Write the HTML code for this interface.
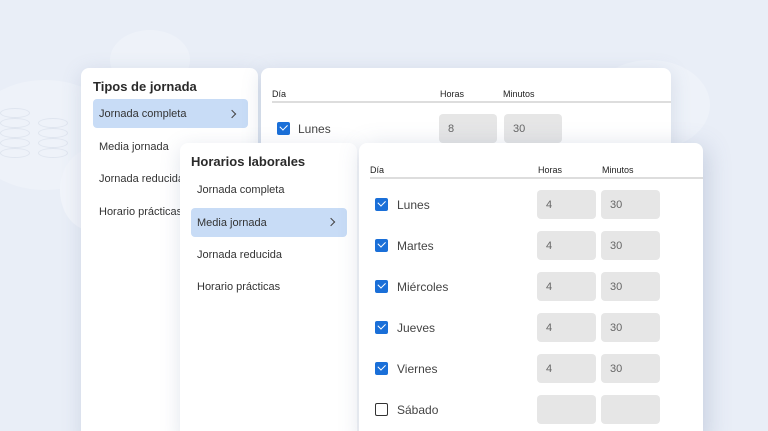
<!DOCTYPE html>
<html><head><meta charset="utf-8"><style>
*{margin:0;padding:0;box-sizing:border-box}
html,body{width:768px;height:431px;overflow:hidden}
body{background:#e9eef7;font-family:"Liberation Sans",sans-serif;position:relative;color:#333}
.card{position:absolute;background:#fff;border-radius:8px;box-shadow:0 4px 20px rgba(90,110,150,.18)}
.t{position:absolute;font-size:11px;color:#333;white-space:nowrap;line-height:1}
.title{font-size:13px;font-weight:bold;color:#2a2a2a}
.hl{position:absolute;background:#c8dcf6;border-radius:4px}
.chev{position:absolute;width:6px;height:6px;border-right:1.5px solid #444;border-top:1.5px solid #444;transform:rotate(45deg)}
.hdr{font-size:9px;color:#222}
.line{position:absolute;height:1.5px;background:#ddd}
.cb{position:absolute;width:13px;height:13px;border-radius:2px;background:#1a6fd8}
.cb::after{content:"";position:absolute;left:3px;top:2px;width:6px;height:3.5px;border-left:1.8px solid #fff;border-bottom:1.8px solid #fff;transform:rotate(-45deg)}
.cb.off{background:#fff;border:1.5px solid #333}
.cb.off::after{display:none}
.in{position:absolute;width:59px;height:29px;background:#e6e6e6;border-radius:4px;font-size:11px;color:#666;padding:10px 0 0 9px;line-height:1}
.day{font-size:12px;color:#444}
.cloud{position:absolute;border-radius:50%;background:#eef2f9}
.db{position:absolute;width:30px;height:10px;border:1.5px solid #dfe5ef;border-radius:50%}
</style></head><body>
<div class="cloud" style="left:-30px;top:80px;width:150px;height:110px"></div>
<div class="cloud" style="left:60px;top:150px;width:60px;height:80px;background:#f1f4fa"></div>
<div class="cloud" style="left:110px;top:30px;width:80px;height:60px"></div>
<div class="cloud" style="left:590px;top:60px;width:120px;height:90px"></div>
<div class="db" style="left:0;top:108px"></div><div class="db" style="left:0;top:118px"></div><div class="db" style="left:0;top:128px"></div><div class="db" style="left:0;top:138px"></div><div class="db" style="left:0;top:148px"></div>
<div class="db" style="left:38px;top:118px"></div><div class="db" style="left:38px;top:128px"></div><div class="db" style="left:38px;top:138px"></div><div class="db" style="left:38px;top:148px"></div>

<!-- back left -->
<div class="card" style="left:81px;top:68px;width:177px;height:380px"></div>
<div class="t title" style="left:93px;top:80px">Tipos de jornada</div>
<div class="hl" style="left:93px;top:99px;width:155px;height:29px"></div>
<div class="t" style="left:99px;top:109px">Jornada completa</div>
<div class="chev" style="left:229px;top:111px"></div>
<div class="t" style="left:99px;top:142px">Media jornada</div>
<div class="t" style="left:99px;top:174px">Jornada reducida</div>
<div class="t" style="left:99px;top:207px">Horario prácticas</div>

<!-- back right -->
<div class="card" style="left:261px;top:68px;width:410px;height:380px"></div>
<div class="t hdr" style="left:272px;top:90px">Día</div>
<div class="t hdr" style="left:440px;top:90px">Horas</div>
<div class="t hdr" style="left:503px;top:90px">Minutos</div>
<div class="line" style="left:272px;top:101px;width:399px"></div>
<div class="cb" style="left:277px;top:122px"></div>
<div class="t day" style="left:298px;top:123px">Lunes</div>
<div class="in" style="left:439px;top:114px;width:58px">8</div>
<div class="in" style="left:504px;top:114px;width:58px">30</div>

<!-- front left -->
<div class="card" style="left:180px;top:143px;width:177px;height:300px"></div>
<div class="t title" style="left:191px;top:155px">Horarios laborales</div>
<div class="t" style="left:197px;top:185px">Jornada completa</div>
<div class="hl" style="left:191px;top:208px;width:156px;height:29px"></div>
<div class="t" style="left:197px;top:218px">Media jornada</div>
<div class="chev" style="left:328px;top:219px"></div>
<div class="t" style="left:197px;top:250px">Jornada reducida</div>
<div class="t" style="left:197px;top:282px">Horario prácticas</div>

<!-- front right -->
<div class="card" style="left:359px;top:143px;width:344px;height:300px;box-shadow:4px 4px 24px rgba(90,110,150,.25)"></div>
<div class="t hdr" style="left:370px;top:166px">Día</div>
<div class="t hdr" style="left:538px;top:166px">Horas</div>
<div class="t hdr" style="left:602px;top:166px">Minutos</div>
<div class="line" style="left:370px;top:177px;width:333px"></div>

<div class="cb" style="left:375px;top:198px"></div><div class="t day" style="left:397px;top:199px">Lunes</div>
<div class="in" style="left:537px;top:190px">4</div><div class="in" style="left:601px;top:190px">30</div>

<div class="cb" style="left:375px;top:239px"></div><div class="t day" style="left:397px;top:240px">Martes</div>
<div class="in" style="left:537px;top:231px">4</div><div class="in" style="left:601px;top:231px">30</div>

<div class="cb" style="left:375px;top:280px"></div><div class="t day" style="left:397px;top:281px">Miércoles</div>
<div class="in" style="left:537px;top:272px">4</div><div class="in" style="left:601px;top:272px">30</div>

<div class="cb" style="left:375px;top:321px"></div><div class="t day" style="left:397px;top:322px">Jueves</div>
<div class="in" style="left:537px;top:313px">4</div><div class="in" style="left:601px;top:313px">30</div>

<div class="cb" style="left:375px;top:362px"></div><div class="t day" style="left:397px;top:363px">Viernes</div>
<div class="in" style="left:537px;top:354px">4</div><div class="in" style="left:601px;top:354px">30</div>

<div class="cb off" style="left:375px;top:403px"></div><div class="t day" style="left:397px;top:404px">Sábado</div>
<div class="in" style="left:537px;top:395px"></div><div class="in" style="left:601px;top:395px"></div>
</body></html>
